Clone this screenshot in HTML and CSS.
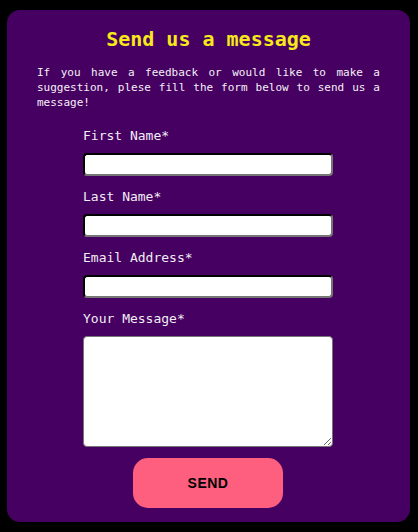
FILE: index.html
```html
<!DOCTYPE html>
<html>
<head>
<meta charset="utf-8">
<link rel="stylesheet" href="styles.css">
</head>
<body>
<main class="card">
  <h1 class="title">Send us a message</h1>
  <p class="intro">If you have a feedback or would like to make a suggestion, plese fill the form below to send us a message!</p>
  <form class="form">
    <label class="label" for="fn">First Name*</label>
    <input class="field" id="fn" type="text">
    <label class="label" for="ln">Last Name*</label>
    <input class="field" id="ln" type="text">
    <label class="label" for="em">Email Address*</label>
    <input class="field" id="em" type="email">
    <label class="label" for="msg">Your Message*</label>
    <textarea class="area" id="msg"></textarea>
    <button class="send" type="button">SEND</button>
  </form>
</main>
</body>
</html>
```
FILE: styles.css
```css
html, body {
  margin: 0;
  padding: 0;
  background: #000;
}
body {
  padding: 10px 8px 10px 7px;
  font-family: "DejaVu Sans Mono", "Liberation Mono", monospace;
}
.card {
  background: #460062;
  border-radius: 13px;
  width: 403px;
  height: 512px;
  box-sizing: border-box;
  padding: 17px 30px 14px 30px;
  display: flex;
  flex-direction: column;
}
.title {
  margin: 0;
  color: #f7e81c;
  font-size: 20px;
  line-height: 24px;
  font-weight: bold;
  text-align: center;
}
.intro {
  margin: 14px 0 0 0;
  color: #f4f0f6;
  font-size: 11px;
  line-height: 15px;
  text-align: justify;
}
.form {
  width: 250px;
  align-self: flex-start;
  margin-left: 46px;
  display: flex;
  flex-direction: column;
  margin-top: 16px;
}
.label {
  display: block;
  color: #f1eef4;
  font-size: 13px;
  line-height: 16px;
  padding-top: 2px;
  margin-bottom: 9px;
}
.field {
  box-sizing: border-box;
  width: 250px;
  height: 23px;
  margin: 0 0 11px 0;
  background: #fff;
  border: 2px inset #767676;
  border-top-color: #2b2b2b;
  border-left-color: #2b2b2b;
  border-radius: 4px;
  padding: 1px 2px;
}
.area {
  box-sizing: border-box;
  width: 250px;
  height: 111px;
  margin: 0;
  background: #fff;
  border: 1px solid #767676;
  border-radius: 4px;
}
.send {
  align-self: center;
  margin-top: 11px;
  width: 150px;
  height: 50px;
  border: none;
  border-radius: 15px;
  background: #ff5f7f;
  color: #000;
  font-family: "Liberation Sans", Arial, sans-serif;
  font-weight: bold;
  font-size: 14px;
  letter-spacing: 0.5px;
}
```
